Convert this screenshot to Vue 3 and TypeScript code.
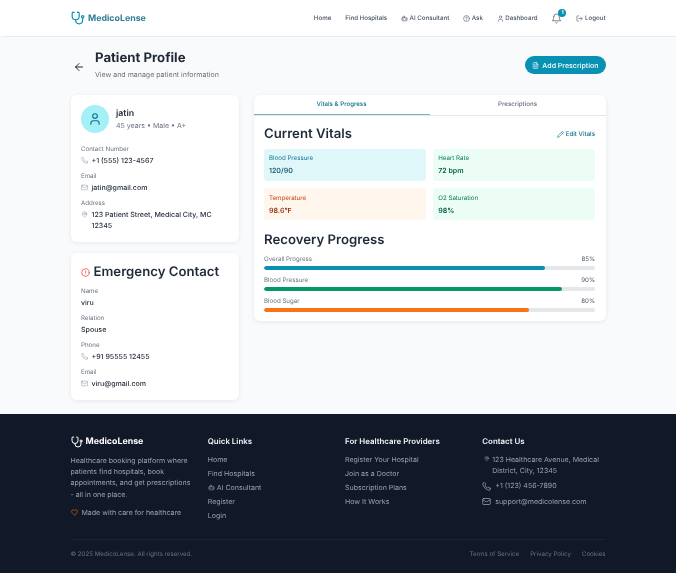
<script setup lang="ts">
const icons: Record<string, string> = {
  steth: '<path d="M4.8 2.3A.3.3 0 1 0 5 2H4a2 2 0 0 0-2 2v5a6 6 0 0 0 12 0V4a2 2 0 0 0-2-2h-1a.2.2 0 1 0 .3.3"/><path d="M8 15v1a6 6 0 0 0 12 0v-4"/><circle cx="20" cy="10" r="2"/>',
  bot: '<path d="M12 8V4H8"/><rect width="16" height="12" x="4" y="8" rx="2"/><path d="M2 14h2M20 14h2M15 13v2M9 13v2"/>',
  help: '<circle cx="12" cy="12" r="10"/><path d="M9.09 9a3 3 0 0 1 5.83 1c0 2-3 3-3 3"/><path d="M12 17h.01"/>',
  user: '<path d="M19 21v-2a4 4 0 0 0-4-4H9a4 4 0 0 0-4 4v2"/><circle cx="12" cy="7" r="4"/>',
  bell: '<path d="M6 8a6 6 0 0 1 12 0c0 7 3 9 3 9H3s3-2 3-9"/><path d="M10.3 21a1.94 1.94 0 0 0 3.4 0"/>',
  logout: '<path d="M9 21H5a2 2 0 0 1-2-2V5a2 2 0 0 1 2-2h4"/><path d="m16 17 5-5-5-5"/><path d="M21 12H9"/>',
  file: '<path d="M14.5 2H6a2 2 0 0 0-2 2v16a2 2 0 0 0 2 2h12a2 2 0 0 0 2-2V7.5L14.5 2z"/><path d="M14 2v6h6"/><path d="M16 13H8M16 17H8M10 9H8"/>',
  phone: '<path d="M22 16.92v3a2 2 0 0 1-2.18 2 19.79 19.79 0 0 1-8.63-3.07 19.5 19.5 0 0 1-6-6 19.79 19.79 0 0 1-3.07-8.67A2 2 0 0 1 4.11 2h3a2 2 0 0 1 2 1.72 12.84 12.84 0 0 0 .7 2.81 2 2 0 0 1-.45 2.11L8.09 9.91a16 16 0 0 0 6 6l1.27-1.27a2 2 0 0 1 2.11-.45 12.84 12.84 0 0 0 2.81.7A2 2 0 0 1 22 16.92z"/>',
  mail: '<rect width="20" height="16" x="2" y="4" rx="2"/><path d="m22 7-8.97 5.7a1.94 1.94 0 0 1-2.06 0L2 7"/>',
  pin: '<path d="M20 10c0 6-8 12-8 12s-8-6-8-12a8 8 0 0 1 16 0Z"/><circle cx="12" cy="10" r="3"/>',
  alert: '<circle cx="12" cy="12" r="10"/><path d="M12 8v4M12 16h.01"/>',
  pencil: '<path d="M17 3a2.85 2.83 0 1 1 4 4L7.5 20.5 2 22l1.5-5.5Z"/><path d="m15 5 4 4"/>',
  heart: '<path d="M19 14c1.49-1.46 3-3.21 3-5.5A5.5 5.5 0 0 0 16.5 3c-1.76 0-3 .5-4.5 2-1.5-1.5-2.74-2-4.5-2A5.5 5.5 0 0 0 2 8.5c0 2.3 1.5 4.05 3 5.5l7 7Z"/>',
  back: '<path d="m12 19-7-7 7-7"/><path d="M19 12H5"/>',
}

const vitals = [
  { label: 'Blood Pressure', value: '120/90', kind: 'blue' },
  { label: 'Heart Rate', value: '72 bpm', kind: 'green' },
  { label: 'Temperature', value: '98.6°F', kind: 'orange' },
  { label: 'O2 Saturation', value: '98%', kind: 'green' },
]

const progress = [
  { label: 'Overall Progress', pct: 85, color: '#0891b2' },
  { label: 'Blood Pressure', pct: 90, color: '#059669' },
  { label: 'Blood Sugar', pct: 80, color: '#f97316' },
]

const providerLinks = ['Register Your Hospital', 'Join as a Doctor', 'Subscription Plans', 'How It Works']
</script>

<template>
  <div class="app">
    <header class="nav">
      <div class="wrap nav-in">
        <div class="brand">
          <svg class="ic brand-ic" viewBox="0 0 24 24" v-html="icons.steth"></svg>
          <span>MedicoLense</span>
        </div>
        <nav class="links">
          <a>Home</a>
          <a>Find Hospitals</a>
          <a><svg class="ic" viewBox="0 0 24 24" v-html="icons.bot"></svg>AI Consultant</a>
          <a><svg class="ic" viewBox="0 0 24 24" v-html="icons.help"></svg>Ask</a>
          <a><svg class="ic" viewBox="0 0 24 24" v-html="icons.user"></svg>Dashboard</a>
          <span class="bell">
            <svg class="ic" viewBox="0 0 24 24" v-html="icons.bell"></svg>
            <b class="badge">1</b>
          </span>
          <a><svg class="ic" viewBox="0 0 24 24" v-html="icons.logout"></svg>Logout</a>
        </nav>
      </div>
    </header>

    <main class="wrap main">
      <div class="head">
        <div class="head-left">
          <svg class="ic back" viewBox="0 0 24 24" v-html="icons.back"></svg>
          <div>
            <h1>Patient Profile</h1>
            <p>View and manage patient information</p>
          </div>
        </div>
        <button class="add">
          <svg class="ic" viewBox="0 0 24 24" v-html="icons.file"></svg>
          Add Prescription
        </button>
      </div>

      <div class="cols">
        <div class="left">
          <section class="card">
            <div class="who">
              <div class="avatar"><svg class="ic" viewBox="0 0 24 24" v-html="icons.user"></svg></div>
              <div>
                <div class="name">jatin</div>
                <div class="meta">45 years • Male • A+</div>
              </div>
            </div>
            <div class="field">
              <label>Contact Number</label>
              <div class="val"><svg class="ic" viewBox="0 0 24 24" v-html="icons.phone"></svg>+1 (555) 123-4567</div>
            </div>
            <div class="field">
              <label>Email</label>
              <div class="val"><svg class="ic" viewBox="0 0 24 24" v-html="icons.mail"></svg>jatin@gmail.com</div>
            </div>
            <div class="field">
              <label>Address</label>
              <div class="val top"><svg class="ic" viewBox="0 0 24 24" v-html="icons.pin"></svg><span>123 Patient Street, Medical City, MC 12345</span></div>
            </div>
          </section>

          <section class="card">
            <h2 class="em"><svg class="ic" viewBox="0 0 24 24" v-html="icons.alert"></svg>Emergency Contact</h2>
            <div class="field">
              <label>Name</label>
              <div class="val">viru</div>
            </div>
            <div class="field">
              <label>Relation</label>
              <div class="val">Spouse</div>
            </div>
            <div class="field">
              <label>Phone</label>
              <div class="val"><svg class="ic" viewBox="0 0 24 24" v-html="icons.phone"></svg>+91 95555 12455</div>
            </div>
            <div class="field">
              <label>Email</label>
              <div class="val"><svg class="ic" viewBox="0 0 24 24" v-html="icons.mail"></svg>viru@gmail.com</div>
            </div>
          </section>
        </div>

        <section class="card right">
          <div class="tabs">
            <div class="tab active">Vitals &amp; Progress</div>
            <div class="tab">Prescriptions</div>
          </div>
          <div class="body">
            <div class="row-head">
              <h2>Current Vitals</h2>
              <a class="edit"><svg class="ic" viewBox="0 0 24 24" v-html="icons.pencil"></svg>Edit Vitals</a>
            </div>
            <div class="vitals">
              <div v-for="v in vitals" :key="v.label" class="vital" :class="v.kind">
                <div class="v-label">{{ v.label }}</div>
                <div class="v-value">{{ v.value }}</div>
              </div>
            </div>
            <h2 class="rec">Recovery Progress</h2>
            <div v-for="p in progress" :key="p.label" class="prog">
              <div class="prog-top">
                <span>{{ p.label }}</span>
                <span class="pct">{{ p.pct }}%</span>
              </div>
              <div class="track"><div class="fill" :style="{ width: p.pct + '%', background: p.color }"></div></div>
            </div>
          </div>
        </section>
      </div>
    </main>

    <footer class="foot">
      <div class="wrap">
        <div class="foot-grid">
          <div>
            <div class="foot-brand">
              <svg class="ic" viewBox="0 0 24 24" v-html="icons.steth"></svg>
              <span>MedicoLense</span>
            </div>
            <p class="about">Healthcare booking platform where patients find hospitals, book appointments, and get prescriptions - all in one place.</p>
            <div class="care"><svg class="ic" viewBox="0 0 24 24" v-html="icons.heart"></svg>Made with care for healthcare</div>
          </div>
          <div>
            <h4>Quick Links</h4>
            <a>Home</a>
            <a>Find Hospitals</a>
            <a><svg class="ic" viewBox="0 0 24 24" v-html="icons.bot"></svg>AI Consultant</a>
            <a>Register</a>
            <a>Login</a>
          </div>
          <div>
            <h4>For Healthcare Providers</h4>
            <a v-for="l in providerLinks" :key="l">{{ l }}</a>
          </div>
          <div>
            <h4>Contact Us</h4>
            <div class="c-row addr"><svg class="ic" viewBox="0 0 24 24" v-html="icons.pin"></svg><span>123 Healthcare Avenue, Medical District, City, 12345</span></div>
            <div class="c-row"><svg class="ic big" viewBox="0 0 24 24" v-html="icons.phone"></svg>+1 (123) 456-7890</div>
            <div class="c-row"><svg class="ic big" viewBox="0 0 24 24" v-html="icons.mail"></svg>support@medicolense.com</div>
          </div>
        </div>
        <div class="legal">
          <span>© 2025 MedicoLense. All rights reserved.</span>
          <div class="legal-links">
            <span>Terms of Service</span>
            <span>Privacy Policy</span>
            <span>Cookies</span>
          </div>
        </div>
      </div>
    </footer>
  </div>
</template>

<style>
html,
body {
  margin: 0;
  background: #f9fafb;
}
</style>

<style scoped>
.app {
  font-family: Inter, "Noto Sans", sans-serif;
  text-rendering: geometricPrecision;
  will-change: transform;
  color: #1f2937;
  width: 676px;
  height: 573px;
  overflow: hidden;
  display: flex;
  flex-direction: column;
  background: #f9fafb;
}
.wrap {
  width: 535px;
  margin: 0 auto;
}
.ic {
  width: 7px;
  height: 7px;
  fill: none;
  stroke: currentColor;
  stroke-width: 2;
  stroke-linecap: round;
  stroke-linejoin: round;
  flex: none;
}
.nav {
  height: 36px;
  background: #fff;
  box-shadow: 0 0.5px 1px rgba(0, 0, 0, 0.06);
}
.nav-in {
  height: 100%;
  display: flex;
  align-items: center;
  justify-content: space-between;
}
.brand {
  display: flex;
  align-items: center;
  gap: 3.5px;
  font-size: 8.8px;
  font-weight: 700;
  color: #2f7f95;
}
.brand-ic {
  width: 14px;
  height: 14px;
  color: #0891b2;
}
.links {
  display: flex;
  align-items: center;
  gap: 14px;
  font-size: 6.16px;
  font-weight: 500;
  color: #4b5563;
}
.links a {
  display: flex;
  align-items: center;
  gap: 1.5px;
}
.bell {
  position: relative;
  display: flex;
  color: #4b5563;
}
.bell .ic {
  width: 11px;
  height: 11px;
  stroke-width: 1.6;
}
.badge {
  position: absolute;
  top: -4px;
  right: -4px;
  width: 8px;
  height: 8px;
  border-radius: 50%;
  background: #0891b2;
  color: #fff;
  font-size: 5px;
  line-height: 8px;
  text-align: center;
}
.main {
  flex: 1;
}
.head {
  height: 59px;
  padding-bottom: 1px;
  box-sizing: border-box;
  display: flex;
  align-items: center;
  justify-content: space-between;
}
.head-left {
  display: flex;
  align-items: center;
  gap: 11px;
}
.back {
  width: 12px;
  height: 12px;
  margin-left: 2.5px;
  margin-right: -1px;
  margin-top: 3px;
  color: #1f2937;
}
h1 {
  margin: 0;
  font-size: 13.2px;
  line-height: 17px;
  font-weight: 700;
}
.head p {
  margin: 2px 0 0;
  font-size: 7.04px;
  line-height: 11px;
  color: #6b7280;
}
.add {
  display: flex;
  align-items: center;
  gap: 3.5px;
  height: 17.5px;
  padding: 0 7px;
  border: none;
  border-radius: 9px;
  background: #0891b2;
  color: #fff;
  font: 500 7.04px Inter, sans-serif;
  text-rendering: geometricPrecision;
}
.cols {
  display: grid;
  grid-template-columns: 168.5px 1fr;
  gap: 14.5px;
  align-items: start;
}
.left {
  display: flex;
  flex-direction: column;
  gap: 11px;
}
.card {
  background: #fff;
  border-radius: 6px;
  box-shadow: 0 1px 4px rgba(0, 0, 0, 0.08);
  padding: 10px 10.5px 11px;
}
.who {
  display: flex;
  align-items: center;
  gap: 7px;
  margin-bottom: 12px;
}
.avatar {
  width: 28px;
  height: 28px;
  border-radius: 50%;
  background: #a5f0f7;
  color: #0e7490;
  display: flex;
  align-items: center;
  justify-content: center;
}
.avatar .ic {
  width: 14px;
  height: 14px;
}
.name {
  font-size: 8.8px;
  line-height: 12px;
  font-weight: 600;
}
.meta {
  margin-top: 1px;
  font-size: 7.04px;
  line-height: 10px;
  color: #6b7280;
}
.field {
  margin-top: 6px;
}
.field label {
  display: block;
  font-size: 6.16px;
  line-height: 9px;
  color: #6b7280;
}
.val {
  display: flex;
  align-items: center;
  gap: 3.5px;
  margin-top: 1px;
  font-size: 7.04px;
  line-height: 11px;
  font-weight: 500;
}
.val .ic {
  width: 7px;
  height: 7px;
  color: #9ca3af;
}
.val.top {
  align-items: flex-start;
}
.val.top .ic {
  margin-top: 2px;
}
h2 {
  margin: 0;
  font-size: 13.2px;
  line-height: 17px;
  font-weight: 600;
}
.em {
  display: flex;
  align-items: center;
  gap: 3.5px;
  margin-top: 1px;
  margin-bottom: 6px;
}
.em .ic {
  width: 9px;
  height: 9px;
  color: #ef4444;
}
.right {
  padding: 0;
  overflow: hidden;
}
.tabs {
  display: grid;
  grid-template-columns: 1fr 1fr;
  border-bottom: 0.5px solid #e5e7eb;
}
.tab {
  height: 19px;
  line-height: 19px;
  text-align: center;
  font-size: 6.16px;
  font-weight: 500;
  color: #6b7280;
}
.tab.active {
  color: #0e7490;
  border-bottom: 1px solid #6cb9c9;
}
.body {
  padding: 10px 10.5px 9.5px;
}
.row-head {
  display: flex;
  justify-content: space-between;
  align-items: center;
  margin-bottom: 5.5px;
}
.edit {
  display: flex;
  align-items: center;
  gap: 1.5px;
  font-size: 6.16px;
  font-weight: 500;
  color: #0e7490;
}
.vitals {
  display: grid;
  grid-template-columns: 1fr 1fr;
  gap: 7.5px;
}
.vital {
  height: 32px;
  box-sizing: border-box;
  padding: 5.5px 5px;
  border-radius: 3px;
}
.v-label {
  font-size: 6.16px;
  line-height: 10px;
}
.v-value {
  margin-top: 1px;
  font-size: 7.04px;
  line-height: 11px;
  font-weight: 600;
}
.blue {
  background: #e0f7fa;
}
.blue .v-label {
  color: #0e7490;
}
.blue .v-value {
  color: #155e75;
}
.green {
  background: #ecfdf5;
}
.green .v-label {
  color: #047857;
}
.green .v-value {
  color: #065f46;
}
.orange {
  background: #fff7ed;
}
.orange .v-label {
  color: #c2410c;
}
.orange .v-value {
  color: #9a3412;
}
.rec {
  margin: 11.5px 0 3.5px;
}
.prog {
  margin-top: 6.5px;
}
.prog-top {
  display: flex;
  justify-content: space-between;
  font-size: 6.16px;
  line-height: 9px;
  color: #6b7280;
  margin-bottom: 2px;
}
.pct {
  color: #4b5563;
}
.track {
  height: 3.5px;
  border-radius: 2px;
  background: #e5e7eb;
  overflow: hidden;
}
.fill {
  height: 100%;
  border-radius: 2px;
}
.foot {
  height: 159px;
  background: #111827;
  color: #9ca3af;
  font-size: 7.04px;
}
.foot-grid {
  display: grid;
  grid-template-columns: repeat(4, 1fr);
  gap: 14px;
  padding-top: 22px;
  height: 103px;
  border-bottom: 0.5px solid #1b2432;
}
.foot-brand {
  display: flex;
  align-items: center;
  gap: 3px;
  font-size: 8.8px;
  line-height: 12px;
  font-weight: 700;
  color: #fff;
}
.foot-brand .ic {
  width: 12px;
  height: 12px;
}
.about {
  margin: 6.5px 0 0;
  line-height: 11.44px;
}
.care {
  display: flex;
  align-items: center;
  gap: 4px;
  margin-top: 6.5px;
  line-height: 11px;
}
.care .ic {
  width: 7px;
  height: 7px;
  color: #f97316;
}
h4 {
  margin: 0 0 6.5px;
  font-size: 7.92px;
  line-height: 11px;
  font-weight: 600;
  color: #f3f4f6;
}
.foot-grid a {
  display: flex;
  align-items: center;
  gap: 2px;
  line-height: 11px;
  margin-bottom: 3px;
}
.foot-grid a .ic {
  width: 7px;
  height: 7px;
}
.c-row {
  display: flex;
  align-items: center;
  gap: 4px;
  line-height: 10.5px;
  margin-bottom: 5px;
}
.c-row .big {
  width: 9px;
  height: 9px;
}
.addr {
  align-items: flex-start;
  gap: 2.5px;
  line-height: 11px;
  margin-bottom: 5.5px;
}
.addr .ic {
  width: 5.5px;
  height: 5.5px;
  margin-top: 2.5px;
  margin-left: 2px;
}
.legal {
  display: flex;
  justify-content: space-between;
  align-items: center;
  padding-top: 9.5px;
  font-size: 6.16px;
  line-height: 10px;
  color: #6b7280;
}
.legal-links {
  display: flex;
  gap: 11px;
}
</style>
